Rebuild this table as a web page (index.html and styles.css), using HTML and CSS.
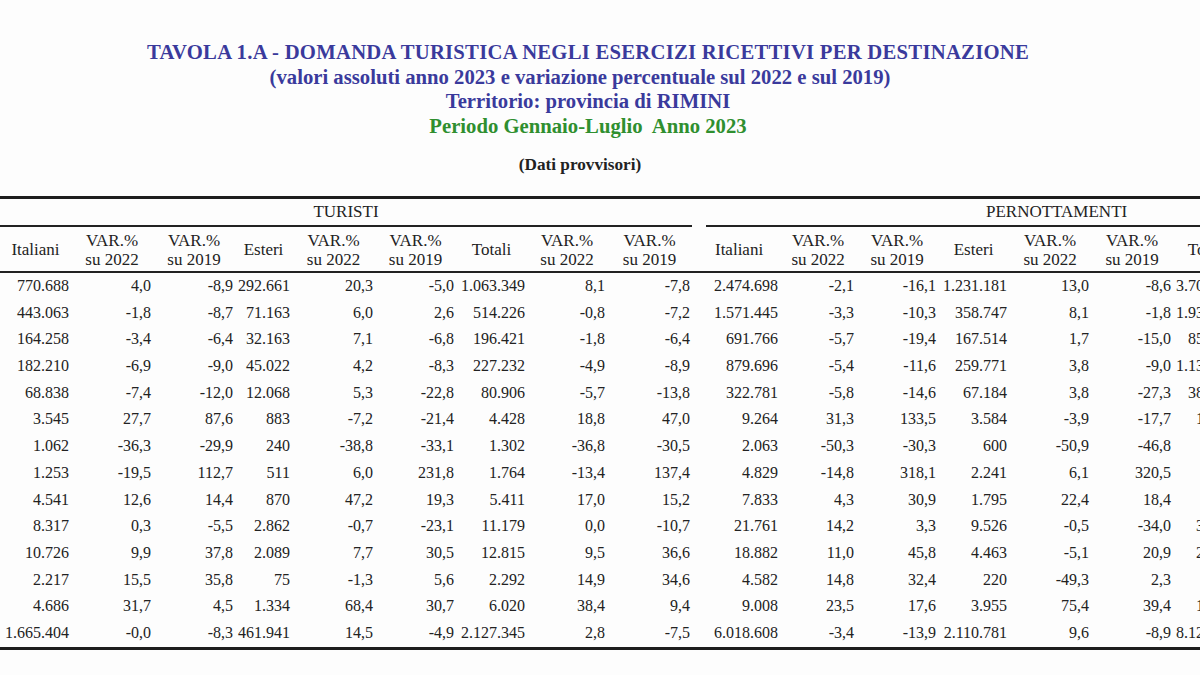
FILE: index.html
```html
<!DOCTYPE html>
<html lang="it">
<head>
    <meta charset="UTF-8">
    <meta name="viewport" content="width=device-width, initial-scale=1.0">
    <title>Tavola 1.A - Domanda turistica Rimini</title>
    <link rel="stylesheet" href="styles.css">
</head>
<body>
    <div class="page">
        <div class="titles">
            <p class="title title-main">TAVOLA 1.A - DOMANDA TURISTICA NEGLI ESERCIZI RICETTIVI PER DESTINAZIONE</p>
            <p class="title shift-left">(valori assoluti anno 2023 e variazione percentuale sul 2022 e sul 2019)</p>
            <p class="title">Territorio: provincia di RIMINI</p>
            <p class="period">Periodo Gennaio-Luglio&nbsp; Anno 2023</p>
            <p class="note shift-left">(Dati provvisori)</p>
        </div>

        <table class="data">
            <colgroup>
                <col class="c-num"><col class="c-var"><col class="c-var2"><col class="c-est"><col class="c-var3"><col class="c-var4"><col class="c-tot"><col class="c-var5"><col class="c-var6">
                <col class="c-gap">
                <col class="c-ita"><col class="c-var7"><col class="c-var"><col class="c-est2"><col class="c-var"><col class="c-var"><col class="c-tot2"><col class="c-var5"><col class="c-var6">
            </colgroup>
            <thead>
                <tr class="group-row">
                    <th colspan="9"><span class="group">TURISTI</span></th>
                    <th></th>
                    <th colspan="9"><span class="group group-right">PERNOTTAMENTI</span></th>
                </tr>
                <tr class="head-row">
                    <th>Italiani</th>
                    <th>VAR.%<br>su 2022</th>
                    <th>VAR.%<br>su 2019</th>
                    <th>Esteri</th>
                    <th>VAR.%<br>su 2022</th>
                    <th>VAR.%<br>su 2019</th>
                    <th>Totali</th>
                    <th>VAR.%<br>su 2022</th>
                    <th>VAR.%<br>su 2019</th>
                    <th></th>
                    <th>Italiani</th>
                    <th>VAR.%<br>su 2022</th>
                    <th>VAR.%<br>su 2019</th>
                    <th>Esteri</th>
                    <th>VAR.%<br>su 2022</th>
                    <th>VAR.%<br>su 2019</th>
                    <th>Totali</th>
                    <th>VAR.%<br>su 2022</th>
                    <th>VAR.%<br>su 2019</th>
                </tr>
            </thead>
            <tbody>
                <tr><td>770.688</td><td>4,0</td><td>-8,9</td><td>292.661</td><td>20,3</td><td>-5,0</td><td>1.063.349</td><td>8,1</td><td>-7,8</td><td></td><td>2.474.698</td><td>-2,1</td><td>-16,1</td><td>1.231.181</td><td>13,0</td><td>-8,6</td><td>3.705.879</td><td></td><td></td></tr>
                <tr><td>443.063</td><td>-1,8</td><td>-8,7</td><td>71.163</td><td>6,0</td><td>2,6</td><td>514.226</td><td>-0,8</td><td>-7,2</td><td></td><td>1.571.445</td><td>-3,3</td><td>-10,3</td><td>358.747</td><td>8,1</td><td>-1,8</td><td>1.930.192</td><td></td><td></td></tr>
                <tr><td>164.258</td><td>-3,4</td><td>-6,4</td><td>32.163</td><td>7,1</td><td>-6,8</td><td>196.421</td><td>-1,8</td><td>-6,4</td><td></td><td>691.766</td><td>-5,7</td><td>-19,4</td><td>167.514</td><td>1,7</td><td>-15,0</td><td>859.280</td><td></td><td></td></tr>
                <tr><td>182.210</td><td>-6,9</td><td>-9,0</td><td>45.022</td><td>4,2</td><td>-8,3</td><td>227.232</td><td>-4,9</td><td>-8,9</td><td></td><td>879.696</td><td>-5,4</td><td>-11,6</td><td>259.771</td><td>3,8</td><td>-9,0</td><td>1.139.467</td><td></td><td></td></tr>
                <tr><td>68.838</td><td>-7,4</td><td>-12,0</td><td>12.068</td><td>5,3</td><td>-22,8</td><td>80.906</td><td>-5,7</td><td>-13,8</td><td></td><td>322.781</td><td>-5,8</td><td>-14,6</td><td>67.184</td><td>3,8</td><td>-27,3</td><td>389.965</td><td></td><td></td></tr>
                <tr><td>3.545</td><td>27,7</td><td>87,6</td><td>883</td><td>-7,2</td><td>-21,4</td><td>4.428</td><td>18,8</td><td>47,0</td><td></td><td>9.264</td><td>31,3</td><td>133,5</td><td>3.584</td><td>-3,9</td><td>-17,7</td><td>12.848</td><td></td><td></td></tr>
                <tr><td>1.062</td><td>-36,3</td><td>-29,9</td><td>240</td><td>-38,8</td><td>-33,1</td><td>1.302</td><td>-36,8</td><td>-30,5</td><td></td><td>2.063</td><td>-50,3</td><td>-30,3</td><td>600</td><td>-50,9</td><td>-46,8</td><td>2.663</td><td></td><td></td></tr>
                <tr><td>1.253</td><td>-19,5</td><td>112,7</td><td>511</td><td>6,0</td><td>231,8</td><td>1.764</td><td>-13,4</td><td>137,4</td><td></td><td>4.829</td><td>-14,8</td><td>318,1</td><td>2.241</td><td>6,1</td><td>320,5</td><td>7.070</td><td></td><td></td></tr>
                <tr><td>4.541</td><td>12,6</td><td>14,4</td><td>870</td><td>47,2</td><td>19,3</td><td>5.411</td><td>17,0</td><td>15,2</td><td></td><td>7.833</td><td>4,3</td><td>30,9</td><td>1.795</td><td>22,4</td><td>18,4</td><td>9.628</td><td></td><td></td></tr>
                <tr><td>8.317</td><td>0,3</td><td>-5,5</td><td>2.862</td><td>-0,7</td><td>-23,1</td><td>11.179</td><td>0,0</td><td>-10,7</td><td></td><td>21.761</td><td>14,2</td><td>3,3</td><td>9.526</td><td>-0,5</td><td>-34,0</td><td>31.287</td><td></td><td></td></tr>
                <tr><td>10.726</td><td>9,9</td><td>37,8</td><td>2.089</td><td>7,7</td><td>30,5</td><td>12.815</td><td>9,5</td><td>36,6</td><td></td><td>18.882</td><td>11,0</td><td>45,8</td><td>4.463</td><td>-5,1</td><td>20,9</td><td>23.345</td><td></td><td></td></tr>
                <tr><td>2.217</td><td>15,5</td><td>35,8</td><td>75</td><td>-1,3</td><td>5,6</td><td>2.292</td><td>14,9</td><td>34,6</td><td></td><td>4.582</td><td>14,8</td><td>32,4</td><td>220</td><td>-49,3</td><td>2,3</td><td>4.802</td><td></td><td></td></tr>
                <tr><td>4.686</td><td>31,7</td><td>4,5</td><td>1.334</td><td>68,4</td><td>30,7</td><td>6.020</td><td>38,4</td><td>9,4</td><td></td><td>9.008</td><td>23,5</td><td>17,6</td><td>3.955</td><td>75,4</td><td>39,4</td><td>12.963</td><td></td><td></td></tr>
                <tr><td>1.665.404</td><td>-0,0</td><td>-8,3</td><td>461.941</td><td>14,5</td><td>-4,9</td><td>2.127.345</td><td>2,8</td><td>-7,5</td><td></td><td>6.018.608</td><td>-3,4</td><td>-13,9</td><td>2.110.781</td><td>9,6</td><td>-8,9</td><td>8.129.389</td><td></td><td></td></tr>
            </tbody>
        </table>
    </div>
</body>
</html>
```

FILE: styles.css
```css
body {
    margin: 0;
    background-color: #fdfdfd;
    color: #222;
    font-family: 'Liberation Serif', 'Times New Roman', serif;
    overflow: hidden;
}

.page {
    width: 1200px;
    height: 675px;
    overflow: hidden;
}

.titles {
    width: 1176px;
    padding-top: 40px;
    text-align: center;
    font-weight: bold;
}

.titles p {
    margin: 0;
    font-size: 20.7px;
    line-height: 24.6px;
}

.title {
    color: #3a3a9c;
}

.title-main {
    letter-spacing: 0.25px;
}

.shift-left {
    padding-right: 16px;
}

.period {
    color: #2f8f2f;
}

.titles .note {
    margin-top: 15px;
    font-size: 17.2px;
    color: #222;
}

.data {
    width: 1406px;
    margin-top: 18px;
    border-collapse: collapse;
    table-layout: fixed;
    font-size: 16px;
    border-top: 3px solid #1e1e1e;
    border-bottom: 3px solid #1e1e1e;
}

.c-num { width: 71px; }
.c-var { width: 82px; }
.c-var2 { width: 82px; }
.c-est { width: 57px; }
.c-var3 { width: 83px; }
.c-var4 { width: 81px; }
.c-tot { width: 71px; }
.c-var5 { width: 80px; }
.c-var6 { width: 85px; }
.c-gap { width: 6px; }
.c-ita { width: 82px; }
.c-var7 { width: 76px; }
.c-est2 { width: 71px; }
.c-tot2 { width: 69px; }

.data th {
    padding: 0;
    font-weight: normal;
    font-size: 17px;
}

.group {
    display: block;
    line-height: 26px;
    border-bottom: 2px solid #222;
}

.group-right {
    margin-left: 8px;
}

.head-row th {
    padding: 4px 0 2px;
    line-height: 19px;
    border-bottom: 2px solid #222;
}

.data td {
    padding: 0 2px 0 0;
    text-align: right;
    line-height: 26.7px;
    white-space: nowrap;
}
```
